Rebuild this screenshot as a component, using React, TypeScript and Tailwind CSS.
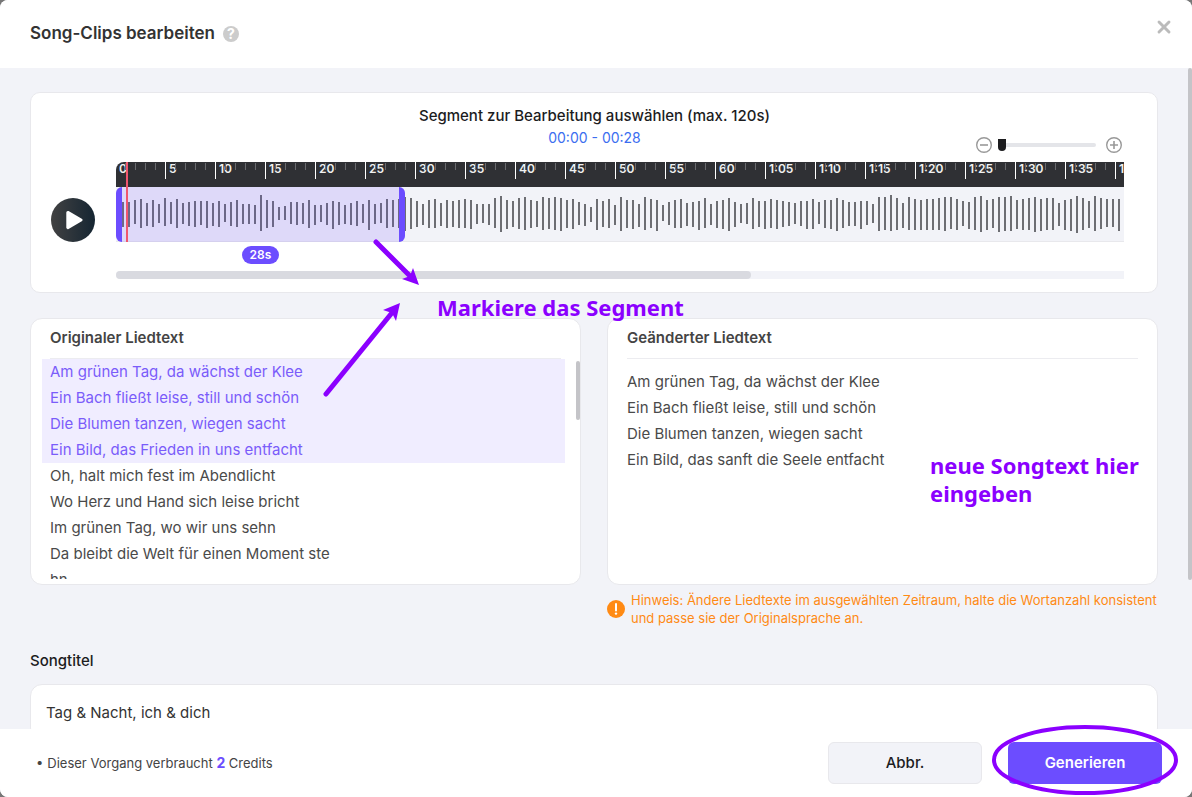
import React, { useState } from 'react';
import { X } from 'lucide-react';

const SECOND = 10;
const BAR_STEP = 6;
const DURATION = 102;
const SELECTED = 28;

// [top, bottom] of every bar inside the 55px high track
const bars = [
  [15, 40], [15, 40], [13, 37], [12, 41], [16, 39], [13, 40], [17, 36], [11, 39], [15, 37], [12, 41],
  [16, 37], [15, 39], [14, 40], [14, 38], [14, 41], [16, 39], [14, 40], [17, 35], [15, 39], [13, 40],
  [17, 37], [17, 37], [18, 37], [8, 44], [13, 41], [14, 40], [20, 33], [19, 33], [15, 37], [15, 38],
  [16, 37], [13, 41], [18, 38], [18, 35], [16, 38], [14, 42], [15, 38], [18, 37], [16, 38], [14, 39],
  [17, 36], [13, 43], [17, 37], [16, 36], [12, 41], [13, 40], [12, 41], [10, 44], [11, 42], [14, 40],
  [17, 38], [13, 41], [12, 41], [16, 39], [13, 41], [14, 40], [13, 41], [12, 41], [13, 42], [17, 37],
  [17, 36], [17, 38], [11, 41], [9, 45], [13, 42], [14, 40], [11, 42], [10, 43], [13, 41], [14, 40],
  [10, 43], [11, 42], [10, 43], [11, 44], [13, 41], [12, 42], [15, 38], [17, 39], [20, 35], [12, 43],
  [14, 40], [12, 41], [18, 38], [10, 44], [13, 41], [13, 42], [17, 40], [10, 43], [12, 41], [13, 44],
  [18, 34], [15, 38], [13, 41], [12, 41], [16, 39], [15, 40], [14, 43], [11, 41], [17, 38], [14, 41],
  [13, 42], [11, 44], [15, 40], [17, 36], [16, 37], [11, 42], [14, 40], [14, 42], [12, 41], [13, 42],
  [14, 40], [15, 39], [16, 37], [14, 39], [14, 42], [12, 42], [15, 37], [13, 41], [13, 42], [11, 44],
  [13, 41], [15, 39], [15, 39], [14, 42], [14, 38], [17, 36], [10, 44], [10, 43], [8, 44], [11, 43],
  [16, 41], [10, 43], [12, 43], [13, 43], [12, 43], [12, 43], [11, 43], [10, 44], [10, 42], [12, 43],
  [14, 39], [15, 42], [10, 43], [9, 45], [13, 43], [12, 41], [10, 45], [10, 44], [9, 44], [13, 42],
  [12, 43], [11, 43], [10, 45], [12, 44], [11, 43], [11, 43], [16, 39], [13, 43], [12, 44], [9, 46],
  [11, 43], [14, 41], [9, 44], [11, 42], [12, 40], [12, 40], [12, 44],
];

const originalLyrics = [
  'Am grünen Tag, da wächst der Klee',
  'Ein Bach fließt leise, still und schön',
  'Die Blumen tanzen, wiegen sacht',
  'Ein Bild, das Frieden in uns entfacht',
  'Oh, halt mich fest im Abendlicht',
  'Wo Herz und Hand sich leise bricht',
  'Im grünen Tag, wo wir uns sehn',
  'Da bleibt die Welt für einen Moment ste',
  'hn',
];

const newLyrics = [
  'Am grünen Tag, da wächst der Klee',
  'Ein Bach fließt leise, still und schön',
  'Die Blumen tanzen, wiegen sacht',
  'Ein Bild, das sanft die Seele entfacht',
].join('\n');

function formatSecond(s: number) {
  if (s <= 60) return String(s);
  return `${Math.floor(s / 60)}:${String(s % 60).padStart(2, '0')}`;
}

function Header() {
  return (
    <header className="flex h-[68px] shrink-0 items-center justify-between bg-white pr-[18px] pl-[30px]">
      <div className="flex items-center gap-2">
        <h1 className="text-[17px] font-semibold text-[#333]">Song-Clips bearbeiten</h1>
        <button
          aria-label="Hilfe"
          className="flex h-4 w-4 items-center justify-center rounded-full bg-[#ccc] text-sm font-bold text-white"
        >
          ?
        </button>
      </div>
      <button aria-label="Schließen" className="mb-3.5 text-[#bbb]">
        <X className="h-5 w-5" strokeWidth={3.5} />
      </button>
    </header>
  );
}

function ZoomControl() {
  const [zoom, setZoom] = useState(0);

  return (
    <div className="mr-0.5 -mb-1 flex items-center justify-end gap-1.5 self-end">
      <button aria-label="Verkleinern">
        <svg className="h-4 w-4" viewBox="0 0 16 16" fill="none" stroke="#999">
          <circle cx="8" cy="8" r="7.3" strokeWidth="1.4" />
          <path d="M4 8h8" strokeWidth="1.6" />
        </svg>
      </button>
      <input
        type="range"
        aria-label="Zoom"
        min={0}
        max={100}
        value={zoom}
        onChange={(e) => setZoom(Number(e.target.value))}
        className="h-3 w-[98px] appearance-none bg-transparent [&::-webkit-slider-runnable-track]:h-1 [&::-webkit-slider-runnable-track]:rounded-full [&::-webkit-slider-runnable-track]:bg-[#e4e5e9] [&::-webkit-slider-thumb]:-mt-1 [&::-webkit-slider-thumb]:h-3 [&::-webkit-slider-thumb]:w-2 [&::-webkit-slider-thumb]:appearance-none [&::-webkit-slider-thumb]:rounded-b-full [&::-webkit-slider-thumb]:bg-[#1c1c1e]"
      />
      <button aria-label="Vergrößern" className="ml-1">
        <svg className="h-4 w-4" viewBox="0 0 16 16" fill="none" stroke="#999">
          <circle cx="8" cy="8" r="7.3" strokeWidth="1.4" />
          <path d="M4 8h8M8 4v8" strokeWidth="1.6" />
        </svg>
      </button>
    </div>
  );
}

function Ruler() {
  return (
    <svg className="block h-[25px] w-full rounded-tl-lg bg-[#2f3034]">
      {Array.from({ length: DURATION }, (_, s) => {
        const x = s * SECOND - 1;
        const major = s % 5 === 0;
        return (
          <g key={s}>
            {s > 0 && (
              <rect x={x} y={major ? 0 : 1} width="1" height={major ? 17 : 7} fill={major ? '#fff' : '#68696d'} />
            )}
            {major && (
              <text x={x + 4} y="11" fill="#f0f0f0" className="text-xs font-semibold">
                {formatSecond(s)}
              </text>
            )}
          </g>
        );
      })}
    </svg>
  );
}

function Timeline() {
  return (
    <div className="min-w-0 flex-1">
      <div className="relative overflow-hidden">
        <Ruler />
        <svg className="block h-[55px] w-full border-b border-[#e8e8ec] bg-[#f2f3f8]">
          {bars.map(([top, bottom], i) => (
            <rect key={i} x={i * BAR_STEP + 6} y={top} width="2" height={bottom - top} fill="#6d6e73" />
          ))}
        </svg>
        <div
          className="absolute bottom-0 left-0 h-[55px] rounded-md border-x-6 border-[#6c4dff] bg-[#6c4dff]/15"
          style={{ width: SELECTED * SECOND + 9 }}
        />
        <div className="absolute top-0 left-2.5 h-full w-0.5 bg-[#f0566f]" />
      </div>
      <div className="mt-1 flex justify-center" style={{ width: SELECTED * SECOND + 9 }}>
        <span className="rounded-full bg-[#6c4dff] px-2 text-xs leading-[18px] font-semibold text-white">
          {SELECTED}s
        </span>
      </div>
      <div className="mt-[7px] h-2 rounded-l-full bg-[#f2f3f8]">
        <div className="h-full w-[63%] rounded-full bg-[#d9dae0]" />
      </div>
    </div>
  );
}

function SegmentCard() {
  return (
    <section className="rounded-[10px] border border-[#e8e8ec] bg-white pt-3 pr-[33px] pb-[13px] pl-5">
      <div className="grid grid-cols-[1fr_auto_1fr] pl-3.5">
        <div />
        <div className="text-center">
          <h2 className="text-[15px] leading-[22px] font-medium text-[#1c1c1e]">
            Segment zur Bearbeitung auswählen (max. 120s)
          </h2>
          <p className="text-sm leading-[22px] text-[#3b6ef0]">00:00 - 00:28</p>
        </div>
        <ZoomControl />
      </div>
      <div className="mt-[13px] flex items-start gap-[21px]">
        <button
          aria-label="Abspielen"
          className="mt-9 flex h-11 w-11 shrink-0 items-center justify-center rounded-full bg-gradient-to-r from-[#424242] to-[#152532]"
        >
          <svg className="h-5 w-5" viewBox="0 0 20 20" fill="#fff" stroke="#fff" strokeWidth="3" strokeLinejoin="round">
            <path d="M4.8 2.4L18 10L4.8 17.6Z" />
          </svg>
        </button>
        <Timeline />
      </div>
    </section>
  );
}

function OriginalLyrics() {
  return (
    <section className="flex h-[267px] flex-col rounded-xl border border-[#e8e8ec] bg-white">
      <h2 className="mx-[19px] border-b border-[#ececf0] pt-[7px] pb-[9px] text-[15px] leading-[23px] font-semibold text-[#444]">
        Originaler Liedtext
      </h2>
      <div className="flex h-[220px] justify-between overflow-hidden">
        <div className="mr-[11px] ml-[11px] flex-1">
          {originalLyrics.map((line, i) => (
            <p
              key={line}
              className={`px-2 text-[15px] leading-[26px] ${
                i < 4 ? 'bg-[#f0edff] text-[#7a5cfa]' : 'text-[#4a4a4a]'
              }`}
            >
              {line}
            </p>
          ))}
        </div>
        <div className="mt-0.5 h-[59px] w-1 rounded-full bg-[#c4c4c8]" />
      </div>
    </section>
  );
}

function ChangedLyrics() {
  return (
    <div>
      <section className="flex h-[267px] flex-col rounded-xl border border-[#e8e8ec] bg-white px-[19px]">
        <label
          htmlFor="new-lyrics"
          className="border-b border-[#ececf0] pt-[7px] pb-[9px] text-[15px] leading-[23px] font-semibold text-[#444]"
        >
          Geänderter Liedtext
        </label>
        <textarea
          id="new-lyrics"
          defaultValue={newLyrics}
          className="flex-1 resize-none pt-2.5 text-[15px] leading-[26px] text-[#4a4a4a] outline-none"
        />
      </section>
      <div className="mt-1.5 flex items-center gap-1.5 text-[#ff8a14]">
        <svg className="h-[18px] w-[18px] shrink-0" viewBox="0 0 18 18">
          <circle cx="9" cy="9" r="9" fill="#ff8a14" />
          <path d="M9 4v6.5" stroke="#fff" strokeWidth="2" strokeLinecap="round" />
          <circle cx="9" cy="13.6" r="1.2" fill="#fff" />
        </svg>
        <p className="text-[13px] leading-[18px]">
          Hinweis: Ändere Liedtexte im ausgewählten Zeitraum, halte die Wortanzahl konsistent und passe sie der
          Originalsprache an.
        </p>
      </div>
    </div>
  );
}

function Footer() {
  return (
    <footer className="flex h-[68px] shrink-0 items-center justify-between bg-white pr-[30px] pl-9">
      <p className="flex gap-1 text-[13px] text-[#444]">
        <span>•</span>
        <span>
          Dieser Vorgang verbraucht <b className="text-sm font-bold text-[#6c4dff]">2</b> Credits
        </span>
      </p>
      <div className="flex gap-[26px]">
        <button className="h-[42px] w-[154px] rounded-md border border-[#e8e8ec] bg-[#f2f3f8] text-[15px] font-medium text-[#1c1c1e]">
          Abbr.
        </button>
        <button className="h-[42px] w-[154px] rounded-md bg-[#6c4dff] text-[15px] font-semibold text-white">
          Generieren
        </button>
      </div>
    </footer>
  );
}

function Annotations() {
  return (
    <div className="pointer-events-none absolute inset-0 font-['Noto_Sans',sans-serif] text-[22px] leading-7 font-bold text-[#8b00ff]">
      <svg className="absolute inset-0 h-full w-full" fill="none" stroke="#8b00ff">
        <path d="M376 242L409 275M326 394L391 314" strokeWidth="5" strokeLinecap="round" />
        <path d="M419 285L402 279L410 276L413 268ZM400 303L383 310L392 313L396 321Z" fill="#8b00ff" stroke="none" />
      </svg>
      <p className="absolute top-[293px] left-[437px] whitespace-nowrap">Markiere das Segment</p>
      <p className="absolute top-[451px] left-[930px] whitespace-nowrap">
        neue Songtext hier
        <br />
        eingeben
      </p>
      <svg className="absolute right-[14px] bottom-0.5 h-[70px] w-[186px]" fill="none" stroke="#8b00ff">
        <ellipse cx="93" cy="35" rx="91" ry="33" strokeWidth="4" />
      </svg>
    </div>
  );
}

export default function App() {
  return (
    <div className="bg-[#777] font-['Inter',sans-serif]">
      <div className="relative flex h-screen flex-col overflow-hidden rounded-lg bg-[#f2f3f8]">
        <Header />
        <div className="flex min-h-0 flex-1">
          <main className="min-w-0 flex-1 overflow-hidden pt-6 pr-[30px] pl-[30px]">
            <SegmentCard />
            <div className="mt-[25px] grid grid-cols-2 gap-[26px]">
              <OriginalLyrics />
              <ChangedLyrics />
            </div>
            <label htmlFor="song-title" className="mt-6 block text-[15px] leading-5 font-medium text-[#1c1c1e]">
              Songtitel
            </label>
            <input
              id="song-title"
              defaultValue="Tag & Nacht, ich & dich"
              className="mt-[13px] h-14 w-full rounded-xl border border-[#e8e8ec] bg-white px-[15px] text-[15px] text-[#333] outline-none"
            />
          </main>
          <div className="w-1">
            <div className="h-[512px] rounded-full bg-[#c4c4c8]" />
          </div>
        </div>
        <Footer />
        <Annotations />
      </div>
    </div>
  );
}
